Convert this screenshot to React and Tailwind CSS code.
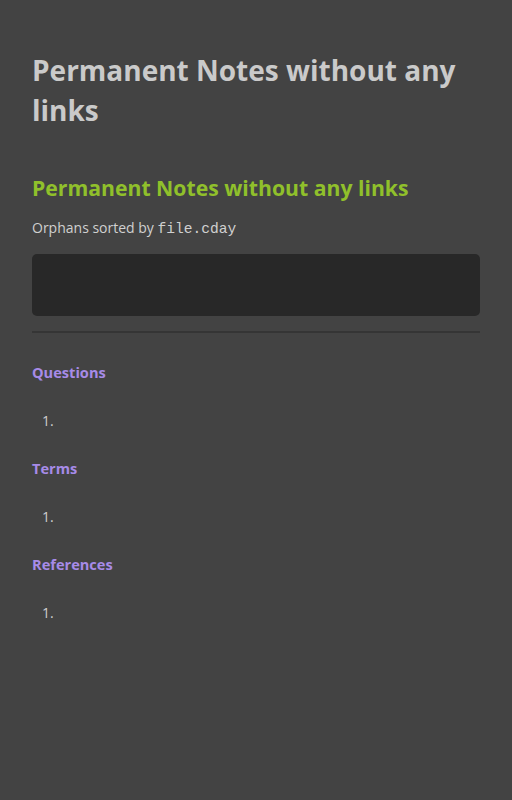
export default function App() {
  const font = { fontFamily: '"Open Sans", "Noto Sans", sans-serif' };
  return (
    <div className="min-h-[800px] w-full bg-[#434343] px-8 pt-[50px]" style={font}>
      <h1 className="text-[28px] font-bold leading-[40px] text-[#cacaca]">Permanent Notes without any links</h1>
      <h2 className="mt-[43px] text-[21.2px] font-bold leading-[30px] text-[#90c02b]">Permanent Notes without any links</h2>
      <p className="mt-[14px] text-[14px] leading-[22px] text-[#d0d0d0]">
        Orphans sorted by <code className="text-[14.6px]" style={{ fontFamily: '"Liberation Mono", "Courier New", monospace' }}>file.cday</code>
      </p>
      <div className="mt-[14px] h-[62px] rounded-[5px] bg-[#282828]"></div>
      <div className="mt-[15px] h-[2px] bg-[#353535]"></div>
      {["Questions", "Terms", "References"].map((t, i) => (
        <div key={t} className={i === 0 ? "mt-[28px]" : "mt-[25px]"}>
          <div className="text-[14.6px] font-bold leading-[22px] text-[#a78be8]">{t}</div>
          <div className="mt-[27px] pl-[10px] text-[14px] leading-[22px] text-[#cfcfcf]">1.</div>
        </div>
      ))}
    </div>
  );
}
